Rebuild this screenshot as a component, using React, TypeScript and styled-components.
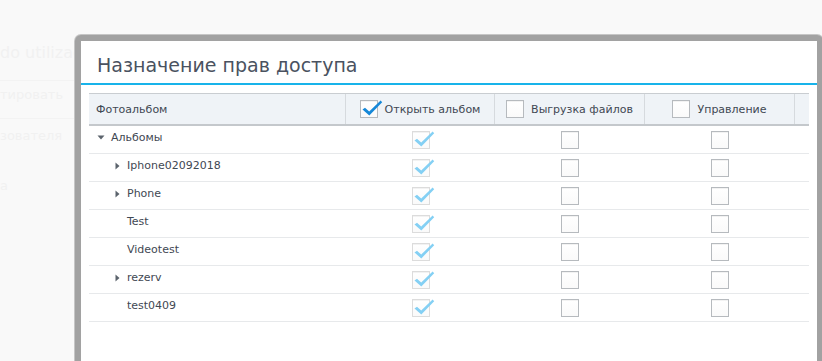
import React from 'react';
import styled, { createGlobalStyle } from 'styled-components';

interface IAlbum {
  name: string;
  depth: number;
  arrow?: 'down' | 'right';
}

const ALBUMS: IAlbum[] = [
  { name: 'Альбомы', depth: 0, arrow: 'down' },
  { name: 'Iphone02092018', depth: 1, arrow: 'right' },
  { name: 'Phone', depth: 1, arrow: 'right' },
  { name: 'Test', depth: 1 },
  { name: 'Videotest', depth: 1 },
  { name: 'rezerv', depth: 1, arrow: 'right' },
  { name: 'test0409', depth: 1 }
];

const COLUMNS = ['Открыть альбом', 'Выгрузка файлов', 'Управление'];

const Tick = ({ color }: { color: string }) => (
  <TickIcon width="22" height="20" viewBox="0 0 22 20">
    <path
      d="M1.5 10.5 L4 8.8 L8.2 12.6 L19.6 1.4 L21.2 3.2 L8.3 16.4 Z"
      fill={color}
    />
  </TickIcon>
);

const Arrow = ({ dir }: { dir: 'down' | 'right' }) => (
  <ArrowSlot>
    {dir === 'down' ? (
      <svg width="8" height="5" viewBox="0 0 8 5">
        <path d="M0.5 0.5 L7.5 0.5 L4 4.5 Z" fill="#5b636c" />
      </svg>
    ) : (
      <svg width="5" height="8" viewBox="0 0 5 8">
        <path d="M0.5 0.5 L4.5 4 L0.5 7.5 Z" fill="#5b636c" />
      </svg>
    )}
  </ArrowSlot>
);

const App: React.FC = () => {
  return (
    <Page>
      <GlobalStyle />

      <Backdrop>
        <BackdropTitle>do utilizador</BackdropTitle>
        <BackdropItem>тировать</BackdropItem>
        <BackdropItem $tall>зователя</BackdropItem>
        <BackdropItem $noLine>а</BackdropItem>
      </Backdrop>

      <Dialog>
        <TitleBar>Назначение прав доступа</TitleBar>

        <Body>
          <HeaderRow>
            <HeaderCell>Фотоальбом</HeaderCell>
            {
              COLUMNS.map((col, idx) => (
                <HeaderCell key={col} $center>
                  <Box $variant="plain">
                    {idx === 0 && <Tick color="#1688d8" />}
                  </Box>
                  {col}
                </HeaderCell>
              ))
            }
            <ScrollSpacer />
          </HeaderRow>

          {
            ALBUMS.map((album) => (
              <Row key={album.name}>
                <NameCell $depth={album.depth}>
                  {album.arrow ? <Arrow dir={album.arrow} /> : <ArrowSlot />}
                  {album.name}
                </NameCell>
                <CheckCell>
                  <Box $variant="disabled">
                    <Tick color="#84d0f4" />
                  </Box>
                </CheckCell>
                <CheckCell>
                  <Box $variant="plain" />
                </CheckCell>
                <CheckCell>
                  <Box $variant="plain" />
                </CheckCell>
              </Row>
            ))
          }
        </Body>
      </Dialog>
    </Page>
  );
};

export default App;

const GlobalStyle = createGlobalStyle`
  html, body {
    margin: 0;
    padding: 0;
  }

  body {
    background: #f9f9f9;
    font-family: "DejaVu Sans", Verdana, sans-serif;
    overflow: hidden;
  }
`;

const Page = styled.div`
  position: relative;
  width: 822px;
  height: 361px;
  overflow: hidden;
  background: #f9f9f9;
`;

const Backdrop = styled.div`
  display: flex;
  flex-direction: column;
  width: 120px;
  padding-top: 40px;
  color: #f1f1f1;
`;

const BackdropTitle = styled.div`
  height: 40px;
  font-size: 16px;
  line-height: 26px;
  white-space: nowrap;
  border-bottom: 1px solid #f3f3f3;
`;

const BackdropItem = styled.div<{ $noLine?: boolean; $tall?: boolean }>`
  height: ${(p) => (p.$tall ? 52 : 37)}px;
  font-size: 13px;
  line-height: ${(p) => (p.$tall ? 34 : 28)}px;
  white-space: nowrap;
  border-bottom: 1px solid ${(p) => (p.$noLine || p.$tall ? 'transparent' : '#f3f3f3')};
`;

const Dialog = styled.div`
  position: absolute;
  left: 75px;
  top: 35px;
  width: 748px;
  height: 360px;
  box-sizing: border-box;
  border: 6px solid #a2a2a2;
  border-radius: 6px;
  box-shadow: 0 0 0 1px #c6c6c6;
  background: #ffffff;
  display: flex;
  flex-direction: column;
`;

const TitleBar = styled.div`
  display: flex;
  align-items: center;
  height: 44px;
  box-sizing: border-box;
  padding: 5px 0 0 16px;
  font-size: 19px;
  color: #4a5260;
  border-bottom: 2px solid #18b3ea;
`;

const Body = styled.div`
  padding: 8px 8px 0;
  display: flex;
  flex-direction: column;
`;

const HeaderRow = styled.div`
  display: grid;
  grid-template-columns: 257px 149px 150px 150px 16px;
  height: 33px;
  box-sizing: border-box;
  background: #eff3f7;
  border-top: 1px solid #c9cdd1;
  border-bottom: 2px solid #c4c8cc;
  font-size: 11px;
  color: #3f4853;
`;

const HeaderCell = styled.div<{ $center?: boolean }>`
  display: flex;
  align-items: center;
  justify-content: ${(p) => (p.$center ? 'center' : 'flex-start')};
  gap: 7px;
  padding-left: ${(p) => (p.$center ? 0 : 7)}px;
  border-right: 1px solid #d6dade;
  white-space: nowrap;
`;

const ScrollSpacer = styled.div``;

const Row = styled.div`
  display: grid;
  grid-template-columns: 257px 149px 150px 150px;
  height: 28px;
  box-sizing: border-box;
  border-bottom: 1px solid #e7e9eb;
  font-size: 11px;
  color: #3f4853;
`;

const NameCell = styled.div<{ $depth: number }>`
  display: flex;
  align-items: center;
  padding-left: ${(p) => 8 + p.$depth * 16}px;
  padding-bottom: 4px;
  white-space: nowrap;
`;

const ArrowSlot = styled.span`
  display: inline-flex;
  align-items: center;
  justify-content: center;
  width: 8px;
  margin-right: 6px;
`;

const CheckCell = styled.div`
  display: flex;
  align-items: center;
  justify-content: center;
`;

const Box = styled.span<{ $variant: 'plain' | 'disabled' }>`
  position: relative;
  flex: none;
  width: 18px;
  height: 18px;
  box-sizing: border-box;
  border: 1px solid ${(p) => (p.$variant === 'disabled' ? '#dcdcdc' : '#b6babe')};
  background: linear-gradient(#ffffff, #fafafa);
  box-shadow: inset 0 1px 0 #f2f2f2;
`;

const TickIcon = styled.svg`
  position: absolute;
  left: 0;
  top: -2px;
  overflow: visible;
`;
